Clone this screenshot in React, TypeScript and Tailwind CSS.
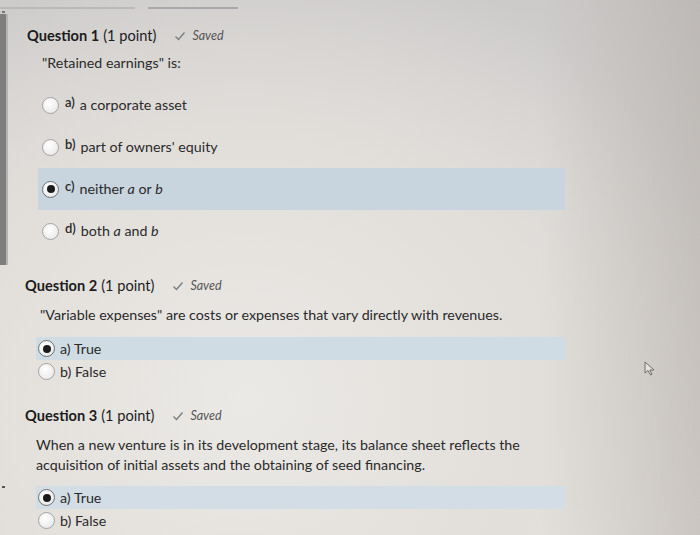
import React from "react";

type Opt = { key: string; label: React.ReactNode; selected?: boolean };

function Radio({ selected }: { selected?: boolean }) {
  return (
    <span
      className={`flex h-[17px] w-[17px] shrink-0 items-center justify-center rounded-full border bg-[radial-gradient(circle_at_40%_35%,#ffffff,#e4e4e4)] ${
        selected ? "border-[#6f6f6f] border-[1.5px]" : "border-[#a3a3a3]"
      }`}
    >
      {selected && <span className="h-[8px] w-[8px] rounded-full bg-[#1c1c1c]" />}
    </span>
  );
}

function Saved() {
  return (
    <span className="ml-[18px] flex items-center gap-[6px] text-[12.5px] italic text-[#555]">
      <svg width="12" height="10" viewBox="0 0 12 10" fill="none">
        <path d="M1.5 5.5 L4.5 8.5 L10.5 1.5" stroke="#7a7a7a" strokeWidth="1.3" />
      </svg>
      Saved
    </span>
  );
}

function Heading({ n, left }: { n: number; left: string }) {
  return (
    <div className={`flex h-[20px] items-center text-[14.6px] text-[#1c1c1c] ${left}`}>
      <span className="font-bold">Question {n}</span>
      <span className="ml-[4px]">(1 point)</span>
      <Saved />
    </div>
  );
}

const Q1: Opt[] = [
  { key: "a)", label: "a corporate asset" },
  { key: "b)", label: "part of owners' equity" },
  {
    key: "c)",
    label: (
      <>
        neither <i>a</i> or <i>b</i>
      </>
    ),
    selected: true,
  },
  {
    key: "d)",
    label: (
      <>
        both <i>a</i> and <i>b</i>
      </>
    ),
  },
];

const TF: Opt[] = [
  { key: "a)", label: "True", selected: true },
  { key: "b)", label: "False" },
];

export default function App() {
  return (
    <div
      className="relative h-[535px] w-[700px] overflow-hidden bg-[radial-gradient(ellipse_at_35%_75%,#ebe9e5_0%,#e2dfdb_45%,rgba(200,195,190,0)_80%),linear-gradient(to_bottom,#cdcbca,#e6e3df)] text-[14.25px] text-[#2a2a2a]"
      style={{ fontFamily: "Lato, 'Open Sans', sans-serif" }}
    >
      {/* right edge shading */}
      <div className="pointer-events-none absolute inset-y-0 right-0 w-[160px] bg-[linear-gradient(to_right,rgba(170,163,158,0),rgba(170,163,158,0.45))]" />

      {/* left scrollbar */}
      <div className="absolute left-0 top-[14px] h-[251px] w-[8px] border-r-2 border-[#b4b3b3] bg-[#7e7e7e]" />
      <div className="absolute left-[2px] top-[11px] h-[2px] w-[3px] bg-[#777]" />
      <div className="absolute left-[2px] top-[486px] h-[2px] w-[3px] bg-[#555]" />

      {/* cursor */}
      <svg className="absolute left-[644px] top-[361px]" width="12" height="16" viewBox="0 0 12 16" fill="none">
        <path d="M1 1 L1 12 L4 9.5 L6.5 14 L8 13.3 L5.8 9 L10 9 Z" fill="#e6e3df" stroke="#6c6c6c" strokeWidth="1" />
      </svg>

      <div className="relative flex flex-col">
        {/* top rules */}
        <div className="flex h-[16px] items-start pt-[7px]">
          <div className="h-[2px] w-[135px] bg-[#b9b8ba]" />
          <div className="ml-[13px] h-[2px] w-[90px] bg-[#a9a8ad]" />
        </div>

        {/* Question 1 */}
        <div className="mt-[10px]">
          <Heading n={1} left="ml-[27px]" />
        </div>
        <div className="ml-[42px] mt-[7px] h-[20px] leading-[20px]">"Retained earnings" is:</div>
        <div className="mt-[11px] flex flex-col">
          {Q1.map((o) => (
            <div
              key={o.key}
              className={`ml-[38px] flex h-[42px] w-[527px] items-center pl-[4px] ${o.selected ? "bg-[#c8d4de]" : ""}`}
            >
              <Radio selected={o.selected} />
              <span className="ml-[6px] -translate-y-[2px] text-[13px] font-semibold">{o.key}</span>
              <span className="ml-[5px]">{o.label}</span>
            </div>
          ))}
        </div>

        {/* Question 2 */}
        <div className="mt-[24px]">
          <Heading n={2} left="ml-[25px]" />
        </div>
        <div className="ml-[40px] mt-[9px] h-[20px] leading-[20px]">
          "Variable expenses" are costs or expenses that vary directly with revenues.
        </div>
        <div className="mt-[12px] flex flex-col">
          {TF.map((o) => (
            <div
              key={o.key}
              className={`ml-[36px] flex h-[23px] w-[530px] items-center pl-[2px] ${o.selected ? "bg-[#d0dce4]" : ""}`}
            >
              <Radio selected={o.selected} />
              <span className="ml-[5px]">
                {o.key} {o.label}
              </span>
            </div>
          ))}
        </div>

        {/* Question 3 */}
        <div className="mt-[23px]">
          <Heading n={3} left="ml-[25px]" />
        </div>
        <div className="ml-[36px] mt-[9px] w-[510px] leading-[20px]">
          When a new venture is in its development stage, its balance sheet reflects the acquisition of initial
          assets and the obtaining of seed financing.
        </div>
        <div className="mt-[11px] flex flex-col">
          {TF.map((o) => (
            <div
              key={o.key}
              className={`ml-[36px] flex h-[23px] w-[530px] items-center pl-[2px] ${o.selected ? "bg-[#d2dde5]" : ""}`}
            >
              <Radio selected={o.selected} />
              <span className="ml-[5px]">
                {o.key} {o.label}
              </span>
            </div>
          ))}
        </div>
      </div>
    </div>
  );
}
